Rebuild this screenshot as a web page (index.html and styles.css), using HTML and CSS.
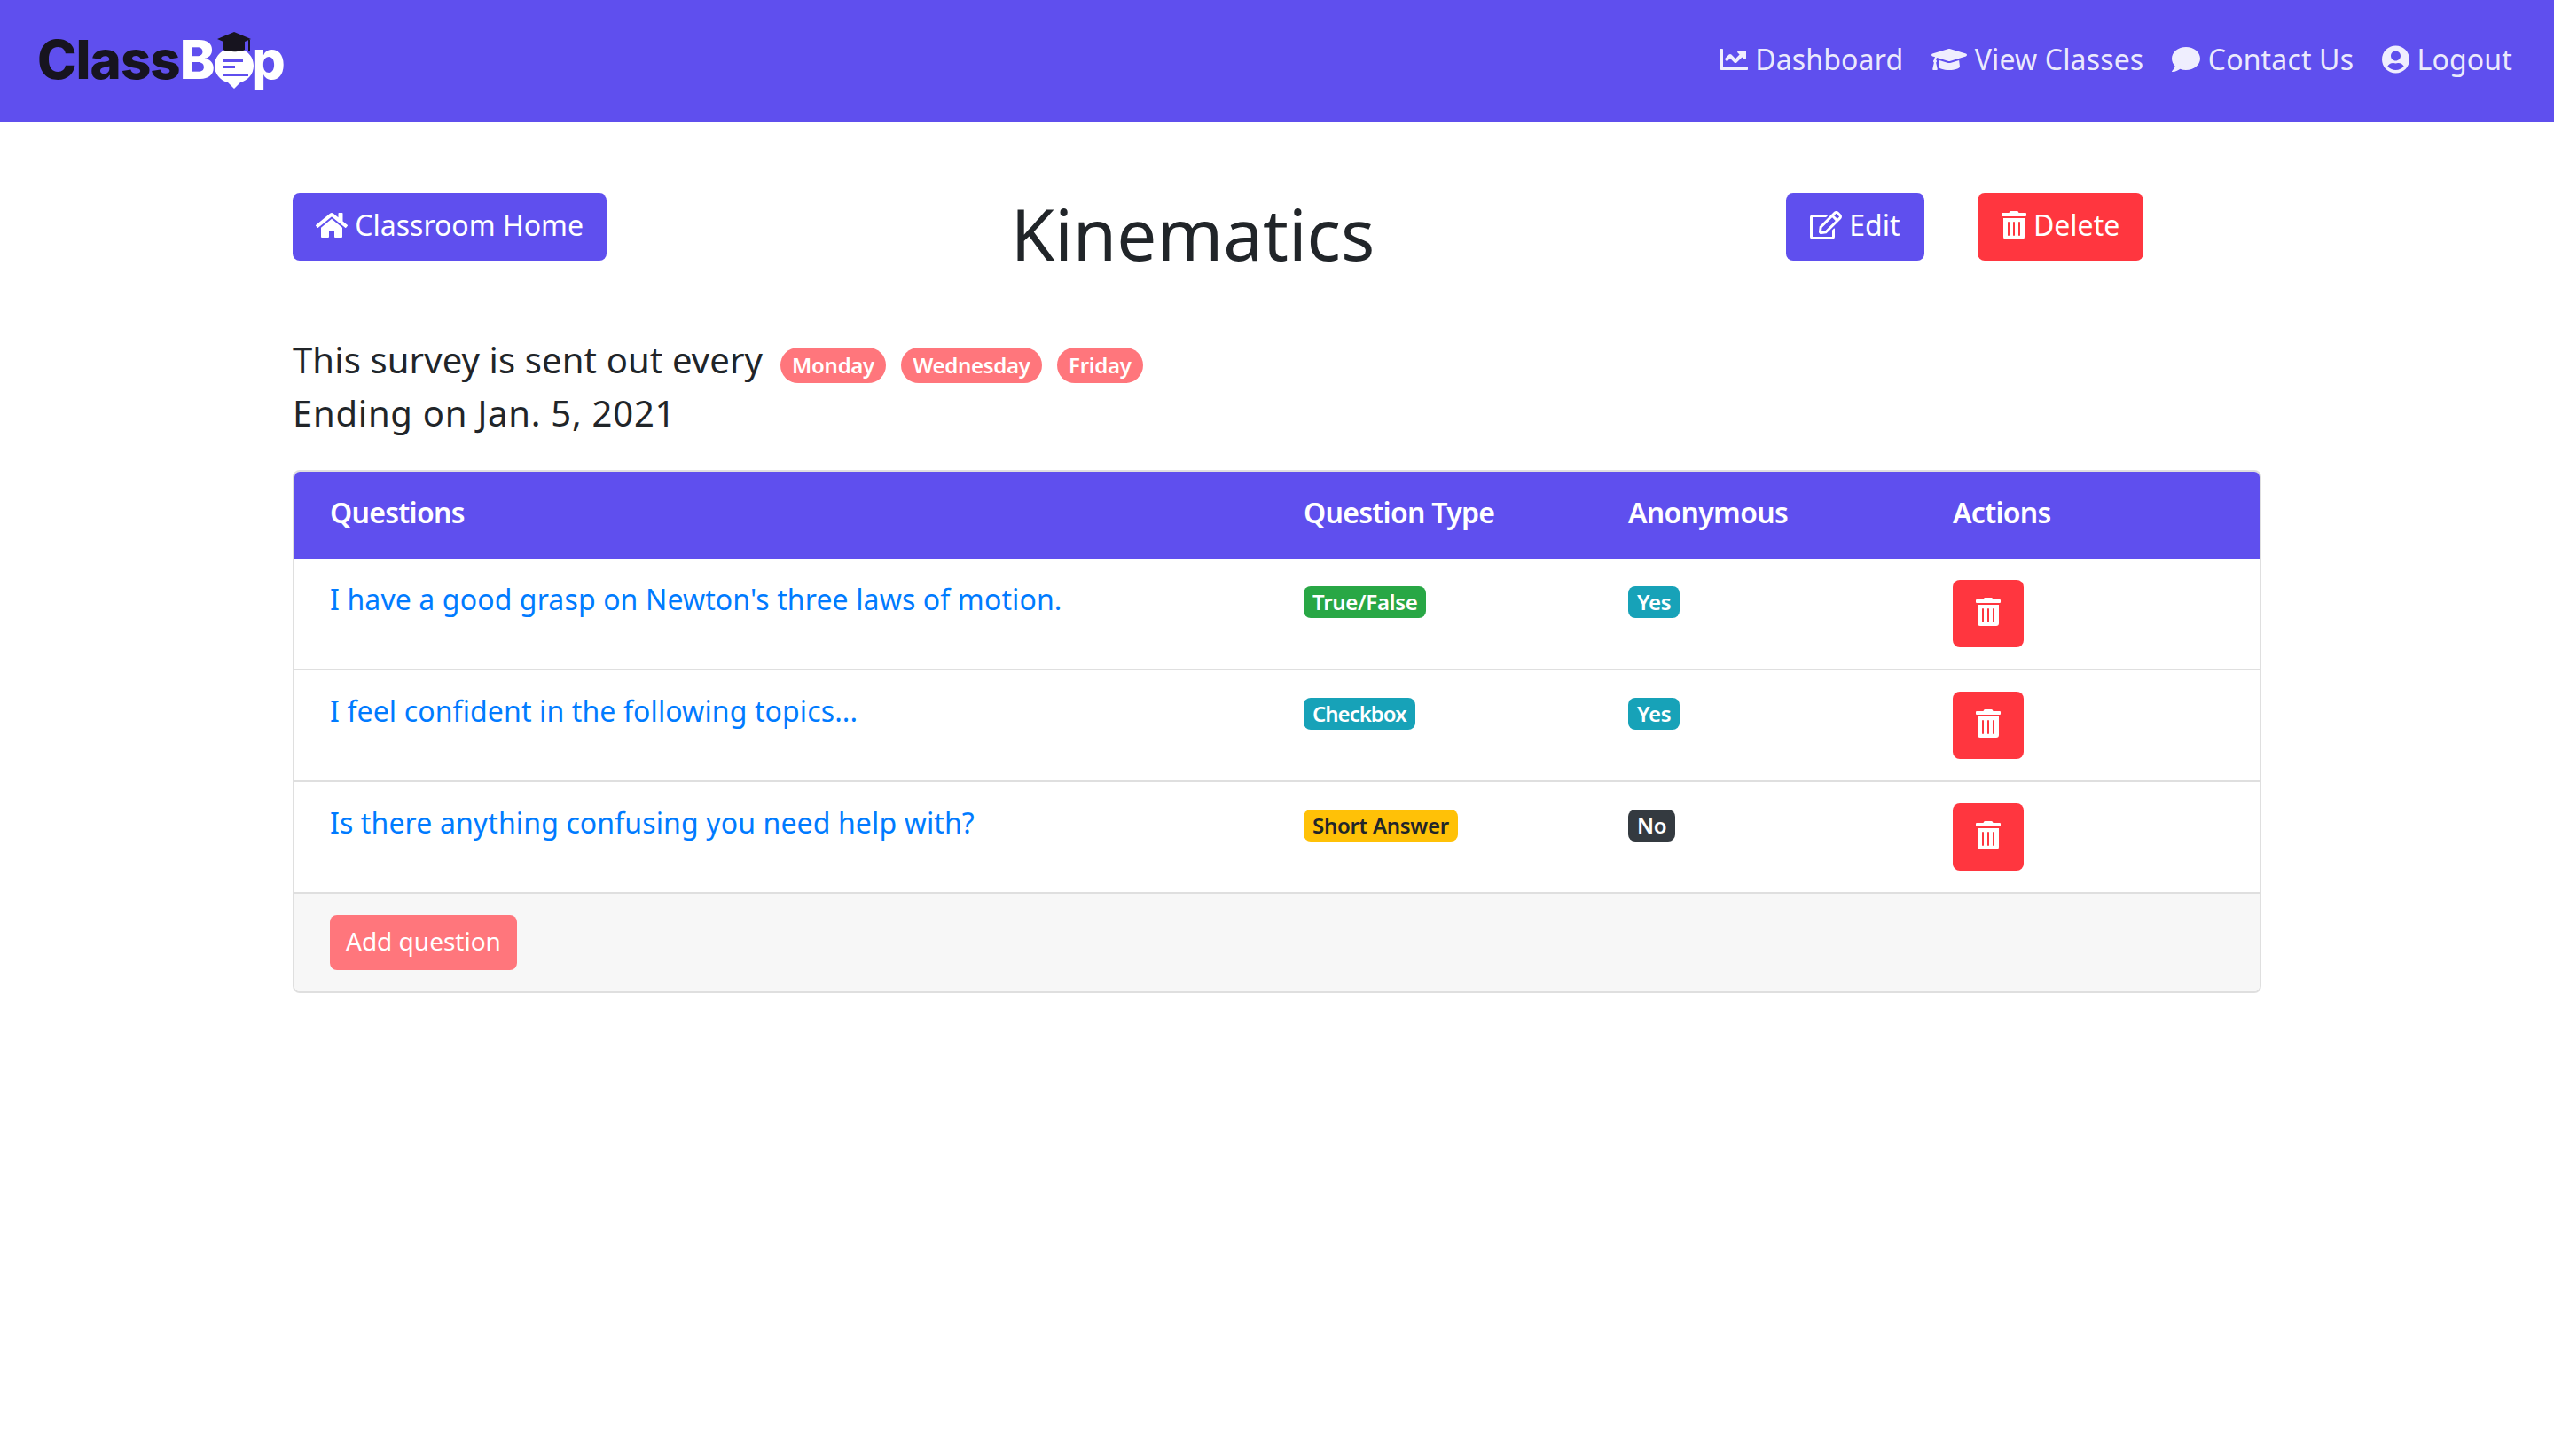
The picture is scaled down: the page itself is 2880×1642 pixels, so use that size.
FILE: index.html
```html
<!DOCTYPE html>
<html lang="en">
<head>
    <meta charset="UTF-8">
    <title>Kinematics - ClassBop</title>
    <link rel="stylesheet" href="styles.css">
</head>
<body>
    <nav class="navbar">
        <a class="brand" href="#">
            <span class="brand-dark">Class</span><span class="brand-light">B</span>
            <svg class="brand-bubble" viewBox="0 0 46 64">
                <path fill="#fff" d="M23 18c12 0 22 8 22 20 0 10-7 17-15 19l-7 7-7-7C8 55 1 48 1 38c0-12 10-20 22-20z"/>
                <path fill="#5f4fee" d="M11 31h22v3H11zM11 38h13v3H11zM11 47h28v3H11z"/>
                <path fill="#17141f" d="M23 0l19 8-7 3v9c-3 3-21 3-24 0v-9L4 8z"/>
                <path fill="#17141f" d="M39 9h2v13h-2z"/>
            </svg>
            <span class="brand-light">p</span>
        </a>
        <div class="nav-links">
            <a class="nav-link" href="#">
                <svg class="icon" viewBox="0 0 512 512"><path d="M496 384H64V80c0-8.84-7.16-16-16-16H16C7.16 64 0 71.16 0 80v336c0 17.67 14.33 32 32 32h464c8.84 0 16-7.16 16-16v-32c0-8.84-7.16-16-16-16zM464 96H345.94c-21.38 0-32.09 25.85-16.97 40.97l32.4 32.4L288 242.75l-73.37-73.37c-12.5-12.5-32.76-12.5-45.25 0l-68.69 68.69c-6.25 6.25-6.25 16.38 0 22.63l22.62 22.62c6.25 6.25 16.38 6.25 22.63 0L192 237.25l73.37 73.37c12.5 12.5 32.76 12.5 45.25 0l96-96 32.4 32.4c15.12 15.12 40.97 4.41 40.97-16.97V112c.01-8.84-7.15-16-15.99-16z"/></svg>
                Dashboard
            </a>
            <a class="nav-link" href="#">
                <svg class="icon" viewBox="0 0 640 512"><path d="M622.34 153.2L343.4 67.5c-15.2-4.67-31.6-4.67-46.79 0L17.66 153.2c-23.54 7.23-23.54 38.36 0 45.59l48.63 14.94c-10.67 13.19-17.23 29.28-17.88 46.9C38.78 266.15 32 276.11 32 288c0 10.78 5.68 19.85 13.86 25.65L20.33 428.53C18.11 438.52 25.71 448 35.94 448h56.11c10.24 0 17.84-9.48 15.62-19.47L82.14 313.65C90.32 307.85 96 298.78 96 288c0-11.57-6.47-21.25-15.66-26.87.76-15.02 8.44-28.3 20.69-36.72L296.6 284.5c9.06 2.78 26.44 6.25 46.79 0l278.95-85.7c23.55-7.24 23.55-38.36 0-45.6zM352.79 315.09c-28.53 8.76-52.84 3.92-65.59 0l-145.02-44.55L128 384c0 35.35 85.96 64 192 64s192-28.65 192-64l-14.18-113.47-145.03 44.56z"/></svg>
                View Classes
            </a>
            <a class="nav-link" href="#">
                <svg class="icon" viewBox="0 0 512 512"><path d="M256 32C114.6 32 0 125.1 0 240c0 49.6 21.4 95 57 130.7C44.5 421.1 2.7 466 2.2 466.5c-2.2 2.3-2.8 5.7-1.5 8.7S4.8 480 8 480c66.3 0 116-31.8 140.6-51.4 32.7 12.3 69 19.4 107.4 19.4 141.4 0 256-93.1 256-208S397.4 32 256 32z"/></svg>
                Contact Us
            </a>
            <a class="nav-link" href="#">
                <svg class="icon" viewBox="0 0 496 512"><path d="M248 8C111 8 0 119 0 256s111 248 248 248 248-111 248-248S385 8 248 8zm0 96c48.6 0 88 39.4 88 88s-39.4 88-88 88-88-39.4-88-88 39.4-88 88-88zm0 344c-58.7 0-111.3-26.6-146.5-68.2 18.8-35.4 55.6-59.8 98.5-59.8 2.4 0 4.8.4 7.1 1.1 13 4.2 26.6 6.9 40.9 6.9 14.3 0 28-2.7 40.9-6.9 2.3-.7 4.7-1.1 7.1-1.1 42.9 0 79.7 24.4 98.5 59.8C359.3 421.4 306.7 448 248 448z"/></svg>
                Logout
            </a>
        </div>
    </nav>

    <main class="page">
        <div class="title-row">
            <div>
                <a class="btn btn-primary" href="#">
                    <svg class="icon" viewBox="0 0 576 512"><path d="M280.37 148.26L96 300.11V464a16 16 0 0 0 16 16l112.06-.29a16 16 0 0 0 15.92-16V368a16 16 0 0 1 16-16h64a16 16 0 0 1 16 16v95.64a16 16 0 0 0 16 16.05L464 480a16 16 0 0 0 16-16V300L295.67 148.26a12.19 12.19 0 0 0-15.3 0zM571.6 251.47L488 182.56V44.05a12 12 0 0 0-12-12h-56a12 12 0 0 0-12 12v72.61L318.47 43a48 48 0 0 0-61 0L4.34 251.47a12 12 0 0 0-1.6 16.9l25.5 31A12 12 0 0 0 45.15 301l235.22-193.74a12.19 12.19 0 0 1 15.3 0L530.9 301a12 12 0 0 0 16.9-1.6l25.5-31a12 12 0 0 0-1.7-16.93z"/></svg>
                    Classroom Home
                </a>
            </div>
            <h1 class="title">Kinematics</h1>
            <div class="title-actions">
                <a class="btn btn-primary" href="#">
                    <svg class="icon" viewBox="0 0 576 512"><path d="M402.3 344.9l32-32c5-5 13.7-1.5 13.7 5.7V464c0 26.5-21.5 48-48 48H48c-26.5 0-48-21.5-48-48V112c0-26.5 21.5-48 48-48h273.5c7.1 0 10.7 8.6 5.7 13.7l-32 32c-1.5 1.5-3.5 2.3-5.7 2.3H48v352h352V350.5c0-2.1.8-4.1 2.3-5.6zm156.6-201.8L296.3 405.7l-90.4 10c-26.2 2.9-48.5-19.2-45.6-45.6l10-90.4L432.9 17.1c22.9-22.9 59.9-22.9 82.7 0l43.2 43.2c22.9 22.9 22.9 60 .1 82.8zM460.1 174L402 115.9 216.2 301.8l-7.3 65.3 65.3-7.3L460.1 174zm64.8-79.7l-43.2-43.2c-4.1-4.1-10.8-4.1-14.8 0L436 82l58.1 58.1 30.9-30.9c4-4.2 4-10.8-.1-14.9z"/></svg>
                    Edit
                </a>
                <a class="btn btn-danger" href="#">
                    <svg class="icon" viewBox="0 0 448 512"><path d="M32 464a48 48 0 0 0 48 48h288a48 48 0 0 0 48-48V128H32zm272-256a16 16 0 0 1 32 0v224a16 16 0 0 1-32 0zm-96 0a16 16 0 0 1 32 0v224a16 16 0 0 1-32 0zm-96 0a16 16 0 0 1 32 0v224a16 16 0 0 1-32 0zM432 32H312l-9.4-18.7A24 24 0 0 0 281.1 0H166.8a23.72 23.72 0 0 0-21.4 13.3L136 32H16A16 16 0 0 0 0 48v32a16 16 0 0 0 16 16h416a16 16 0 0 0 16-16V48a16 16 0 0 0-16-16z"/></svg>
                    Delete
                </a>
            </div>
        </div>

        <div class="schedule">
            <p>This survey is sent out every <span class="day">Monday</span><span class="day">Wednesday</span><span class="day">Friday</span></p>
            <p class="end-date">Ending on Jan. 5, 2021</p>
        </div>

        <div class="card">
            <table class="questions">
                <thead>
                    <tr>
                        <th class="col-question">Questions</th>
                        <th class="col-type">Question Type</th>
                        <th class="col-anon">Anonymous</th>
                        <th class="col-actions">Actions</th>
                    </tr>
                </thead>
                <tbody>
                    <tr>
                        <td><a href="#">I have a good grasp on Newton's three laws of motion.</a></td>
                        <td><span class="badge badge-success">True/False</span></td>
                        <td><span class="badge badge-info">Yes</span></td>
                        <td><a class="btn btn-danger btn-trash" href="#"><svg class="icon" viewBox="0 0 448 512"><path d="M32 464a48 48 0 0 0 48 48h288a48 48 0 0 0 48-48V128H32zm272-256a16 16 0 0 1 32 0v224a16 16 0 0 1-32 0zm-96 0a16 16 0 0 1 32 0v224a16 16 0 0 1-32 0zm-96 0a16 16 0 0 1 32 0v224a16 16 0 0 1-32 0zM432 32H312l-9.4-18.7A24 24 0 0 0 281.1 0H166.8a23.72 23.72 0 0 0-21.4 13.3L136 32H16A16 16 0 0 0 0 48v32a16 16 0 0 0 16 16h416a16 16 0 0 0 16-16V48a16 16 0 0 0-16-16z"/></svg></a></td>
                    </tr>
                    <tr>
                        <td><a href="#">I feel confident in the following topics...</a></td>
                        <td><span class="badge badge-info badge-narrow">Checkbox</span></td>
                        <td><span class="badge badge-info">Yes</span></td>
                        <td><a class="btn btn-danger btn-trash" href="#"><svg class="icon" viewBox="0 0 448 512"><path d="M32 464a48 48 0 0 0 48 48h288a48 48 0 0 0 48-48V128H32zm272-256a16 16 0 0 1 32 0v224a16 16 0 0 1-32 0zm-96 0a16 16 0 0 1 32 0v224a16 16 0 0 1-32 0zm-96 0a16 16 0 0 1 32 0v224a16 16 0 0 1-32 0zM432 32H312l-9.4-18.7A24 24 0 0 0 281.1 0H166.8a23.72 23.72 0 0 0-21.4 13.3L136 32H16A16 16 0 0 0 0 48v32a16 16 0 0 0 16 16h416a16 16 0 0 0 16-16V48a16 16 0 0 0-16-16z"/></svg></a></td>
                    </tr>
                    <tr>
                        <td><a href="#">Is there anything confusing you need help with?</a></td>
                        <td><span class="badge badge-warning">Short Answer</span></td>
                        <td><span class="badge badge-dark">No</span></td>
                        <td><a class="btn btn-danger btn-trash" href="#"><svg class="icon" viewBox="0 0 448 512"><path d="M32 464a48 48 0 0 0 48 48h288a48 48 0 0 0 48-48V128H32zm272-256a16 16 0 0 1 32 0v224a16 16 0 0 1-32 0zm-96 0a16 16 0 0 1 32 0v224a16 16 0 0 1-32 0zm-96 0a16 16 0 0 1 32 0v224a16 16 0 0 1-32 0zM432 32H312l-9.4-18.7A24 24 0 0 0 281.1 0H166.8a23.72 23.72 0 0 0-21.4 13.3L136 32H16A16 16 0 0 0 0 48v32a16 16 0 0 0 16 16h416a16 16 0 0 0 16-16V48a16 16 0 0 0-16-16z"/></svg></a></td>
                    </tr>
                </tbody>
            </table>
            <div class="card-footer">
                <a class="btn btn-add" href="#">Add question</a>
            </div>
        </div>
    </main>
</body>
</html>
```

FILE: styles.css
```css
body {
    margin: 0;
    font-family: "Noto Sans", sans-serif;
    font-size: 32px;
    line-height: 48px;
    color: #212529;
    background-color: #fff;
}

a {
    text-decoration: none;
    color: #007bff;
}

.icon {
    height: 1em;
    fill: currentColor;
    vertical-align: -0.125em;
}

/* Navbar */
.navbar {
    display: flex;
    justify-content: space-between;
    align-items: center;
    height: 138px;
    padding: 0 31px 0 42px;
    background-color: #5f4fee;
}

.brand {
    display: flex;
    align-items: baseline;
    margin-bottom: 16px;
    font-family: Inter, sans-serif;
    font-size: 60px;
    font-weight: 800;
    line-height: 62px;
    letter-spacing: -1px;
}

.brand-dark {
    color: #17141f;
}

.brand-light {
    color: #fff;
}

/* bubble hangs below the text baseline, over the letters */
.brand-bubble {
    width: 46px;
    height: 64px;
    margin: 0 -3px 0 -1px;
    transform: translateY(11px);
}

.nav-links {
    display: flex;
}

.nav-link {
    padding: 0 16px 4px;
    letter-spacing: 0.15px;
    color: rgba(255, 255, 255, 0.9);
}

/* Buttons */
.btn {
    display: inline-block;
    box-sizing: border-box;
    height: 76px;
    padding: 12px 26px;
    border-radius: 8px;
    color: #fff;
}

.btn-primary {
    background-color: #5f4fee;
}

.btn-danger {
    background-color: #ff363f;
}

.btn-trash {
    display: block;
    width: 80px;
    margin-top: 2px;
    text-align: center;
}

.btn-add {
    height: 62px;
    padding: 8px 18px;
    font-size: 28px;
    line-height: 42px;
    background-color: #ff767c;
}

/* Page */
.page {
    width: 2220px;
    margin: 0 auto;
    padding-top: 80px;
}

.title-row {
    display: grid;
    grid-template-columns: 540px 950px 730px;
}

.title {
    height: 96px;
    margin: 0;
    font-size: 80px;
    font-weight: 400;
    line-height: 90px;
    text-align: center;
}

.title-actions {
    display: flex;
    gap: 60px;
    padding-left: 194px;
}

.title-actions .btn {
    padding-left: 27px;
    padding-right: 27px;
}

.schedule {
    margin: 62px 0 34px;
    font-size: 40px;
    line-height: 60px;
    letter-spacing: 0.12px;
}

.schedule p {
    margin: 0;
}

.schedule .end-date {
    letter-spacing: 0.75px;
}

.day {
    display: inline-block;
    margin-left: 16.5px;
    padding: 8px 13.5px;
    border-radius: 20px;
    font-size: 24px;
    line-height: 24px;
    font-weight: 600;
    letter-spacing: -0.3px;
    color: #fff;
    background-color: #ff767c;
}

.day:first-child {
    margin-left: 9px;
}

/* Questions card */
.card {
    border: 2px solid #dfdfdf;
    border-radius: 8px;
    overflow: hidden;
}

.questions {
    width: 100%;
    table-layout: fixed;
    border-spacing: 0;
}

.questions th {
    padding: 22px 40px 28px;
    font-weight: 600;
    letter-spacing: -0.7px;
    text-align: left;
    color: #fff;
    background-color: #5f4fee;
}

.questions td {
    padding: 22px 40px 24px;
    vertical-align: top;
    letter-spacing: 0.12px;
    border-bottom: 2px solid #dfdfdf;
}

.col-question {
    width: 1018px;
}

.col-type,
.col-anon {
    width: 286px;
}

.badge {
    display: inline-block;
    padding: 6px 10px;
    border-radius: 8px;
    font-size: 24px;
    line-height: 24px;
    font-weight: 600;
    letter-spacing: -0.3px;
    color: #fff;
}

.badge-narrow {
    letter-spacing: -1px;
}

.badge-success {
    background-color: #28a745;
}

.badge-info {
    background-color: #17a2b8;
}

.badge-warning {
    color: #212529;
    background-color: #ffc107;
}

.badge-dark {
    background-color: #343a40;
}

.card-footer {
    padding: 24px 40px;
    background-color: #f7f7f7;
}
```
